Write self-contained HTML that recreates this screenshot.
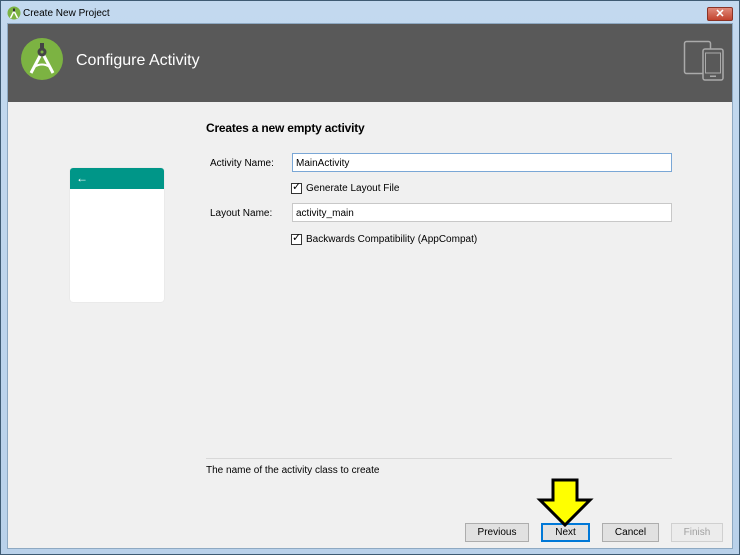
<!DOCTYPE html>
<html><head><style>
*{margin:0;padding:0;box-sizing:border-box}
body{width:740px;height:555px;overflow:hidden;background:#bcd4ec;font-family:"Liberation Sans",sans-serif;font-size:10px;color:#000;position:relative}
.abs{position:absolute}
.frame{left:0;top:0;width:740px;height:555px;border:1px solid #3f5b73;background:linear-gradient(#c3d9ef,#b9d1ea)}
.client{left:7px;top:23px;width:726px;height:526px;background:#f0f0f0;border:1px solid #8ea9c2}
.hdr{left:8px;top:24px;width:724px;height:78px;background:#595959}
.inp{background:#fff;border:1px solid #c8c8c8;height:19px;padding:4px 3px 0;font-size:10px}
.cb{width:11px;height:11px;border:1px solid #333;background:#fff}
.btn{height:19px;top:523px;border:1px solid #adadad;background:#e1e1e1;text-align:center;line-height:18px;font-size:10px}
</style></head><body>
<div class="abs frame"></div>
<svg class="abs" style="left:7px;top:6px" width="14" height="14" viewBox="0 0 14 14"><circle cx="7" cy="7" r="6.5" fill="#7cb342"/><path d="M3.5 12 L7 5 L10.5 12" stroke="#fff" stroke-width="1.5" fill="none"/><rect x="6" y="2.5" width="2" height="3" fill="#333"/></svg>
<div class="abs" style="left:23px;top:8px;font-size:10px;color:#000">Create New Project</div>
<div class="abs" style="left:707px;top:7px;width:26px;height:14px;background:linear-gradient(#e08a7a,#c2432e);border:1px solid #8a3326;border-radius:2px;color:#fff;font-weight:bold;font-size:11px;text-align:center;line-height:12px">✕</div>
<div class="abs client"></div>
<div class="abs hdr"></div>
<svg class="abs" style="left:20px;top:37px" width="44" height="44" viewBox="0 0 44 44"><circle cx="22" cy="22" r="21" fill="#7cb342"/><path d="M11 36 L21 17 M33 36 L23 17" stroke="#fff" stroke-width="3" fill="none"/><path d="M14 30 Q22 25 30 30" stroke="#fff" stroke-width="2" fill="none"/><rect x="20" y="6" width="4" height="5" fill="#444"/><circle cx="22" cy="15" r="4.5" fill="#444"/><circle cx="22" cy="15" r="1.5" fill="#7cb342"/></svg>
<div class="abs" style="left:76px;top:52px;font-size:16px;color:#fff">Configure Activity</div>
<svg class="abs" style="left:683px;top:40px" width="42" height="42" viewBox="0 0 42 42"><rect x="1.5" y="1.5" width="26" height="32" rx="2" fill="none" stroke="#aaa" stroke-width="1.5"/><rect x="20" y="9" width="20" height="31" rx="2" fill="#595959" stroke="#aaa" stroke-width="1.5"/><rect x="22.5" y="13" width="15" height="20" fill="none" stroke="#aaa" stroke-width="1"/><rect x="27" y="35.5" width="6" height="1.5" fill="#aaa"/></svg>
<div class="abs" style="left:206px;top:121px;font-size:12px;font-weight:bold;letter-spacing:-0.2px">Creates a new empty activity</div>
<div class="abs" style="left:70px;top:168px;width:94px;height:134px;background:#fff;border-radius:3px;box-shadow:0 0 1px #ccc"></div>
<div class="abs" style="left:70px;top:168px;width:94px;height:21px;background:#009688;border-radius:3px 3px 0 0;color:#fff;font-size:12px;padding-left:6px;line-height:20px">←</div>
<div class="abs" style="left:210px;top:158px">Activity Name:</div>
<div class="abs inp" style="left:292px;top:153px;width:380px;border-color:#7aa7d6">MainActivity</div>
<div class="abs cb" style="left:291px;top:183px"></div><div class="abs" style="left:292px;top:180px;font-size:11px">✓</div>
<div class="abs" style="left:306px;top:183px">Generate Layout File</div>
<div class="abs" style="left:210px;top:208px">Layout Name:</div>
<div class="abs inp" style="left:292px;top:203px;width:380px">activity_main</div>
<div class="abs cb" style="left:291px;top:234px"></div><div class="abs" style="left:292px;top:231px;font-size:11px">✓</div>
<div class="abs" style="left:306px;top:234px">Backwards Compatibility (AppCompat)</div>
<div class="abs" style="left:206px;top:458px;width:466px;height:1px;background:#d8d8d8"></div>
<div class="abs" style="left:206px;top:465px">The name of the activity class to create</div>
<div class="abs btn" style="left:465px;width:64px">Previous</div>
<div class="abs btn" style="left:541px;width:49px;border:2px solid #0078d7;line-height:16px">Next</div>
<div class="abs btn" style="left:602px;width:57px">Cancel</div>
<div class="abs btn" style="left:671px;width:52px;color:#a0a0a0;background:#ececec;border-color:#d0d0d0">Finish</div>
<svg class="abs" style="left:535px;top:478px" width="60" height="50" viewBox="0 0 60 50"><path d="M18 2 H42 V22 H55 L30 47 L5 22 H18 Z" fill="#ffff00" stroke="#000" stroke-width="3" stroke-linejoin="miter"/></svg>
</body></html>
